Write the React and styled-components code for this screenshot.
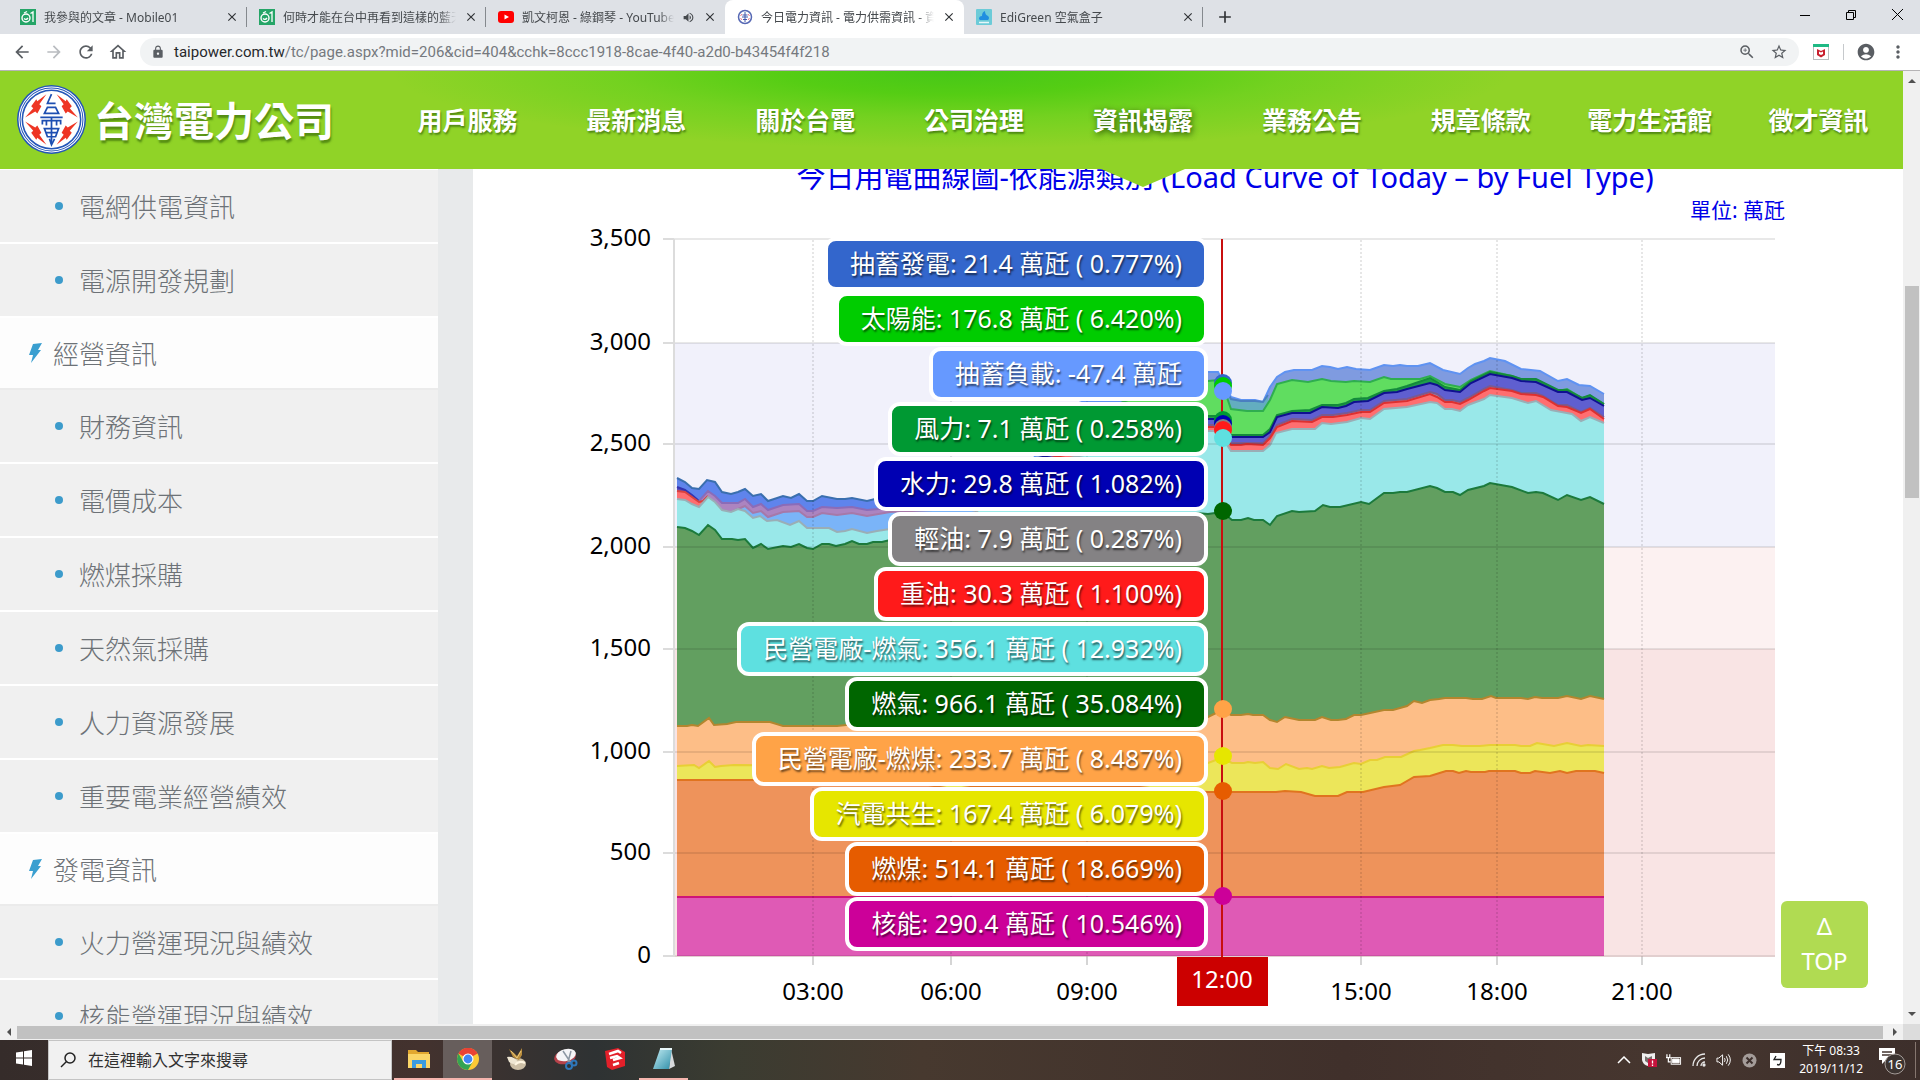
import styled, { createGlobalStyle, css } from "styled-components";
import {
  MdArrowBack,
  MdArrowForward,
  MdRefresh,
  MdOutlineHome,
  MdLock,
  MdZoomIn,
  MdStarBorder,
  MdAccountCircle,
  MdMoreVert,
  MdVolumeUp,
  MdClose,
  MdAdd,
} from "react-icons/md";

const GlobalStyle = createGlobalStyle`
  * {
    box-sizing: border-box;
  }

  body {
    margin: 0;
    font-family: "Noto Sans", "Noto Sans CJK TC", sans-serif;
    overflow: hidden;
  }

  ul {
    margin: 0;
    padding: 0;
    list-style: none;
  }

  a {
    color: inherit;
    text-decoration: none;
  }

  button {
    border: 0;
    padding: 0;
    background: none;
    font: inherit;
    color: inherit;
  }
`;

const Screen = styled.div`
  display: flex;
  flex-direction: column;
  height: 100vh;
  background-color: white;
`;

/* browser */

const TabStrip = styled.div`
  display: flex;
  flex: none;
  height: 34px;
  padding-left: 8px;
  background-color: #dee1e6;
`;

const Tab = styled.div`
  display: flex;
  align-items: center;
  gap: 8px;
  width: 239px;
  padding: 0 8px 0 12px;
  font-size: 12px;
  color: #45494d;
  border-radius: 8px 8px 0 0;
  background-color: ${({ $active }) => ($active ? "white" : "transparent")};

  & > svg {
    flex: none;
  }
`;

const TabTitle = styled.span`
  flex: 1;
  min-width: 0;
  overflow: hidden;
  white-space: nowrap;
  mask-image: linear-gradient(to right, black 90%, transparent);
`;

const TabButton = styled.button`
  display: flex;
  align-items: center;
  flex: none;
  font-size: 14px;
  color: #303336;
`;

const TabDivider = styled.span`
  flex: none;
  align-self: center;
  width: 1px;
  height: 20px;
  margin-left: -1px;
  background-color: #85898e;
`;

const NewTab = styled.button`
  display: flex;
  align-items: center;
  justify-content: center;
  width: 44px;
  font-size: 20px;
  color: #303336;
`;

const WindowButtons = styled.div`
  display: flex;
  margin-left: auto;
`;

const WindowButton = styled.button`
  width: 46px;
  height: 28px;
`;

const Toolbar = styled.div`
  display: flex;
  align-items: center;
  flex: none;
  height: 37px;
  padding: 0 6px;
  border-bottom: 1px solid #b6b4b6;
  color: #5a5e63;
`;

const ToolButton = styled.button`
  display: flex;
  align-items: center;
  justify-content: center;
  width: 32px;
  height: 28px;
  font-size: 20px;
  color: ${({ $muted }) => ($muted ? "#b9bcc0" : "inherit")};
`;

const AddressBar = styled.div`
  display: flex;
  align-items: center;
  flex: 1;
  height: 28px;
  margin-left: 6px;
  margin-right: 6px;
  padding-left: 11px;
  padding-right: 4px;
  border-radius: 14px;
  background-color: #f1f3f4;
`;

const AddressInput = styled.div`
  flex: 1;
  padding-left: 9px;
  font-family: Roboto, sans-serif;
  font-size: 15px;
  color: #75797e;

  & > b {
    font-weight: 400;
    color: #26282b;
  }
`;

const ToolDivider = styled.span`
  width: 1px;
  height: 16px;
  margin: 0 6px;
  background-color: #c6c9cc;
`;

const Viewport = styled.div`
  display: grid;
  grid-template-columns: minmax(0, 1fr) 17px;
  grid-template-rows: minmax(0, 1fr) 16px;
  flex: 1;
  min-height: 0;
`;

const VerticalBar = styled.div`
  display: flex;
  flex-direction: column;
  align-items: center;
  justify-content: space-between;
  padding: 6px 0;
  background-color: #f0f0f0;
`;

const VerticalThumb = styled.div`
  width: 14px;
  height: 212px;
  margin-bottom: 311px;
  background-color: #c1c1c1;
`;

const HorizontalBar = styled.div`
  display: flex;
  align-items: center;
  gap: 4px;
  padding: 0 4px 0 5px;
  background-color: #f0f0f0;
`;

const HorizontalThumb = styled.div`
  flex: 1;
  height: 13px;
  margin-right: 4px;
  background-color: #c1c1c1;
`;

const Corner = styled.div`
  background-color: #dcdcdc;
`;

/* site */

const Site = styled.div`
  position: relative;
  display: flex;
  flex-direction: column;
  min-width: 0;
  min-height: 0;
  overflow: hidden;
`;

const SiteHeader = styled.header`
  position: relative;
  z-index: 1;
  display: flex;
  flex: none;
  height: 98px;
  background:
    radial-gradient(ellipse 560px 78px at 50% 0, #46c718 0%, #55cd14 30%, rgba(108, 209, 30, 0.8) 60%, rgba(143, 211, 38, 0) 100%),
    #90d327;
`;

const Brand = styled.a`
  display: flex;
  align-items: center;
  flex: none;
  gap: 8px;
  width: 383px;
  padding-left: 17px;
  padding-bottom: 2px;
  font-family: "Noto Sans CJK TC", sans-serif;
  font-size: 40px;
  font-weight: 700;
  color: white;
  text-shadow: 1px 3px 2px rgba(60, 110, 10, 0.7);
`;

const MainNav = styled.nav`
  display: flex;
  flex: 1;
`;

const NavLink = styled.a`
  position: relative;
  display: flex;
  align-items: center;
  justify-content: center;
  flex: 1 1 0;
  padding-bottom: 3px;
  white-space: nowrap;
  font-size: 25px;
  font-weight: 700;
  color: white;
  text-shadow: 1px 2px 2px rgba(50, 100, 10, 0.7);

  ${({ $active }) =>
    $active &&
    css`
      text-shadow: 1px 2px 6px rgba(30, 70, 0, 0.9);

      &::after {
        content: "";
        position: absolute;
        top: 100%;
        left: 50%;
        margin-left: -42px;
        border: 42px solid transparent;
        border-top: 18px solid #90d327;
        border-bottom: 0;
      }
    `}
`;

const Body = styled.div`
  display: flex;
  flex: 1;
  min-height: 0;
`;

const Sidebar = styled.nav`
  flex: none;
  width: 473px;
  padding-top: 1px;
  border-right: 35px solid #e8eaeb;
  overflow: hidden;
`;

const SideLink = styled.a`
  display: flex;
  align-items: center;
  gap: 16px;
  height: 74px;
  padding-left: 55px;
  border-bottom: 2px solid white;
  background-color: #f0f0f0;
  font-size: 26px;
  font-weight: 300;
  color: #6d7277;

  &::before {
    content: "";
    width: 8px;
    height: 8px;
    border-radius: 50%;
    background-color: #3c9bcb;
  }
`;

const SideHeading = styled.a`
  display: flex;
  align-items: center;
  gap: 10px;
  height: 72px;
  padding-left: 28px;
  border-bottom: 2px solid #ebebeb;
  background-color: #fdfdfd;
  font-size: 26px;
  font-weight: 300;
  color: #6d7277;
`;

const Main = styled.main`
  flex: 1;
  min-width: 0;
  overflow: hidden;
`;

const Figure = styled.figure`
  width: 1216px;
  margin: 0 auto;
`;

const ChartTitle = styled.figcaption`
  margin-top: -10px;
  padding-left: 74px;
  font-size: 29px;
  line-height: 36px;
  text-align: center;
  white-space: nowrap;
  color: #0000e8;
`;

const Unit = styled.p`
  margin: 0;
  padding-right: 11px;
  font-size: 21px;
  line-height: 31px;
  text-align: right;
  color: #0000e8;
`;

const ChartArea = styled.div`
  position: relative;

  & > svg {
    display: block;
    width: 100%;
  }
`;

const AxisText = styled.text`
  font-size: 24px;
  fill: ${({ $light }) => ($light ? "white" : "black")};
`;

const Balloons = styled.ul`
  position: absolute;
  top: 11px;
  right: 588px;
  display: flex;
  flex-direction: column;
  align-items: flex-end;
  gap: 1px;
`;

const Balloon = styled.li`
  height: 54px;
  padding: 0 22px;
  border: 4px solid white;
  border-radius: 12px;
  background-color: ${({ $color }) => $color};
  font-size: 25px;
  line-height: 44px;
  white-space: nowrap;
  color: white;
  text-shadow: 1px 2px 2px rgba(0, 0, 0, 0.6);
`;

const TopButton = styled.a`
  position: absolute;
  right: 35px;
  bottom: 36px;
  width: 87px;
  padding: 7px 0 10px;
  border-radius: 6px;
  background-color: #b0db52;
  font-size: 24px;
  line-height: 35px;
  text-align: center;
  color: white;
`;

/* taskbar */

const Taskbar = styled.footer`
  display: flex;
  flex: none;
  height: 40px;
  background: linear-gradient(to right, #352c2a 0, #43322e 22%, #2e3233 31%, #3b3c31 38%, #47392f 48%, #40302b 70%, #46362f 86%, #3d2f2b 100%);
  color: white;
`;

const StartButton = styled.button`
  width: 48px;
`;

const SearchBox = styled.label`
  display: flex;
  align-items: center;
  gap: 12px;
  width: 344px;
  padding-left: 11px;
  border: 1px solid #c4c4c4;
  background-color: #f1f1f1;
`;

const SearchInput = styled.input`
  flex: 1;
  min-width: 0;
  border: 0;
  padding: 0;
  background: none;
  font-family: inherit;
  font-size: 16px;

  &::placeholder {
    color: #303030;
    opacity: 1;
  }
`;

const TaskButton = styled.button`
  display: flex;
  align-items: center;
  justify-content: center;
  width: 49px;
  margin-left: ${({ $first }) => ($first ? 2 : 0)}px;
  border-bottom: 2px solid ${({ $open }) => ($open ? "#f5b5ae" : "transparent")};
  background-color: ${({ $active }) => ($active ? "#675e5c" : "transparent")};
`;

const Tray = styled.div`
  display: flex;
  align-items: center;
  gap: 9px;
  margin-left: auto;
  padding-right: 4px;
`;

const TrayIcon = styled.button`
  display: flex;
  align-items: center;
  justify-content: center;
  width: 16px;
  margin-left: ${({ $apart }) => ($apart ? 3 : 0)}px;
`;

const Clock = styled.div`
  margin: 0 6px 0 5px;
  font-size: 12px;
  line-height: 18px;
  text-align: center;
`;

const Notifications = styled.button`
  display: flex;
  align-items: center;
  width: 38px;
  height: 36px;
  border-right: 1px solid #85766f;
`;

const nav = [
  "用戶服務",
  "最新消息",
  "關於台電",
  "公司治理",
  "資訊揭露",
  "業務公告",
  "規章條款",
  "電力生活館",
  "徵才資訊",
];

const sideMenu = [
  { text: "電網供電資訊" },
  { text: "電源開發規劃" },
  { text: "經營資訊", heading: true },
  { text: "財務資訊" },
  { text: "電價成本" },
  { text: "燃煤採購" },
  { text: "天然氣採購" },
  { text: "人力資源發展" },
  { text: "重要電業經營績效" },
  { text: "發電資訊", heading: true },
  { text: "火力營運現況與績效" },
  { text: "核能營運現況與績效" },
];

const balloons = [
  { text: "抽蓄發電: 21.4 萬瓩 ( 0.777%)", color: "#3366cc" },
  { text: "太陽能: 176.8 萬瓩 ( 6.420%)", color: "#00cc00" },
  { text: "抽蓄負載: -47.4 萬瓩", color: "#6699ff" },
  { text: "風力: 7.1 萬瓩 ( 0.258%)", color: "#009933" },
  { text: "水力: 29.8 萬瓩 ( 1.082%)", color: "#0000b3" },
  { text: "輕油: 7.9 萬瓩 ( 0.287%)", color: "#848284" },
  { text: "重油: 30.3 萬瓩 ( 1.100%)", color: "#ff1a1a" },
  { text: "民營電廠-燃氣: 356.1 萬瓩 ( 12.932%)", color: "#5ee0e0" },
  { text: "燃氣: 966.1 萬瓩 ( 35.084%)", color: "#006600" },
  { text: "民營電廠-燃煤: 233.7 萬瓩 ( 8.487%)", color: "#ffa347" },
  { text: "汽電共生: 167.4 萬瓩 ( 6.079%)", color: "#e6e600" },
  { text: "燃煤: 514.1 萬瓩 ( 18.669%)", color: "#e65c00" },
  { text: "核能: 290.4 萬瓩 ( 10.546%)", color: "#cc0099" },
];

// every series is the top edge of its area, drawn back to front
const series = [
  {
    name: "pump-night",
    fill: "#5f84ec",
    stroke: "#3a6fae",
    points:
      "677,478 685,482 692,488 699,489 707,480 715,482 722,492 731,494 738,492 745,489 753,496 761,494 768,501 783,496 791,498 799,494 807,501 813,501 822,496 837,499 845,499 852,498 867,501 875,499 890,500 940,500",
  },
  {
    name: "hydro-night",
    fill: "#5a4bb4",
    stroke: "#3434b0",
    points: "677,487 685,490 692,495 699,501 702,501",
  },
  {
    name: "oil-night",
    fill: "#ac84c0",
    stroke: "#8a6cb8",
    points:
      "699,501 708,491 715,496 722,503 738,503 745,499 753,507 761,504 768,510 783,505 799,504 807,511 813,511 822,507 837,508 852,507 867,510 890,508 940,505",
  },
  {
    name: "load-night",
    fill: "#7ab4f8",
    stroke: "#a679a9",
    points:
      "718,507 722,510 731,512 738,509 745,506 753,513 761,511 768,517 783,512 799,511 807,517 813,517 822,513 837,515 852,513 867,516 890,512 976,508 976,512",
  },
  {
    name: "heavy-oil-night",
    fill: "#ff6e70",
    stroke: "#d9413f",
    points: "677,491 685,492 692,497 699,502 703,501 708,496",
  },
  {
    name: "pumped",
    fill: "#7f9be0",
    stroke: "#5f93f2",
    points:
      "1034,458 1060,415 1076,404 1085,401 1120,401 1208,372 1218,372 1223,382 1231,397 1241,400 1255,400 1263,402 1270,387 1277,377 1285,372 1294,370 1312,370 1322,366 1330,367 1338,369 1347,367 1356,369 1370,370 1384,365 1393,366 1400,365 1407,366 1418,366 1430,363 1443,370 1460,374 1468,368 1475,364 1484,361 1490,358 1505,361 1521,369 1540,371 1558,381 1567,379 1579,385 1590,386 1604,394",
  },
  {
    name: "pump-noon",
    fill: "#63adc0",
    stroke: "#4a7fc0",
    points: "1218,376 1231,399 1241,401 1255,401 1263,402 1268,395",
  },
  {
    name: "solar",
    fill: "#60dd60",
    stroke: "#2fae4f",
    points:
      "1110,408 1118,404 1128,400 1208,381 1218,380 1223,386 1231,409 1247,411 1263,411 1270,400 1277,384 1292,380 1308,382 1322,379 1331,381 1346,382 1354,381 1370,382 1384,377 1391,379 1420,379 1430,376 1445,384 1460,387 1471,380 1490,371 1512,376 1526,381 1537,380 1558,391 1567,389 1582,398 1590,396 1604,404",
  },
  {
    name: "wind",
    fill: "#1f9b4b",
    stroke: "#148a3c",
    points:
      "1208,416 1218,416 1231,435 1263,435 1270,429 1277,415 1292,411 1310,410 1322,405 1338,405 1346,403 1354,399 1368,398 1384,391 1397,389 1407,386 1430,378 1437,382 1445,387 1460,390 1471,381 1490,372 1512,376 1521,379 1536,379 1558,390 1567,390 1582,398 1590,395 1604,404",
  },
  {
    name: "hydro",
    fill: "#5f5fd0",
    stroke: "#101090",
    points:
      "1034,459 1208,419 1218,419 1231,437 1263,437 1270,432 1277,417 1292,413 1310,413 1322,407 1338,408 1346,406 1354,402 1368,401 1384,393 1397,392 1407,389 1430,383 1437,385 1445,390 1460,392 1471,383 1490,374 1512,378 1521,381 1536,382 1558,392 1567,392 1582,400 1590,398 1604,406",
  },
  {
    name: "light-oil",
    fill: "#a58fb4",
    stroke: "#7a5a90",
    points:
      "1208,425 1218,425 1231,443 1247,443 1263,443 1270,436 1277,425 1292,419 1312,420 1322,415 1333,415 1347,413 1361,410 1370,410 1384,401 1407,399 1430,392 1437,394 1445,400 1452,400 1460,402 1468,398 1484,389 1490,386 1512,390 1521,393 1536,393 1543,396 1558,405 1567,405 1581,412 1590,408 1604,417",
  },
  {
    name: "heavy-oil",
    fill: "#ff6e70",
    stroke: "#dd3030",
    points:
      "1050,458 1208,427 1218,427 1231,445 1241,445 1247,444 1263,445 1270,438 1277,427 1292,421 1312,422 1322,417 1333,417 1347,415 1361,412 1370,412 1384,403 1407,401 1430,394 1437,397 1445,402 1452,402 1460,404 1468,400 1484,391 1490,388 1512,391 1521,394 1536,395 1543,397 1558,406 1567,407 1581,413 1590,409 1604,419",
  },
  {
    name: "ipp-gas",
    fill: "#99e8e9",
    stroke: "#9aaeb6",
    points:
      "677,499 685,500 692,504 699,507 708,497 715,502 722,510 731,512 738,509 745,511 753,518 760,516 767,521 777,520 790,525 799,521 807,528 829,528 837,532 845,531 852,529 867,533 877,531 890,529 940,520 976,512 1034,462 1069,458 1208,431 1218,431 1231,451 1263,451 1270,445 1276,433 1292,429 1315,429 1322,423 1331,424 1347,422 1361,418 1370,419 1384,409 1407,407 1430,402 1437,403 1445,409 1452,409 1460,411 1468,405 1484,399 1490,395 1512,398 1528,403 1536,401 1551,410 1572,414 1581,421 1590,417 1604,423",
  },
  {
    name: "gas",
    fill: "#629f60",
    stroke: "#1c7a3c",
    points:
      "677,527 685,528 692,531 699,535 708,525 715,530 722,539 732,539 738,540 745,539 753,548 761,544 768,549 783,546 791,547 799,544 807,548 813,549 822,544 829,544 836,546 845,544 852,541 859,544 867,544 873,542 882,542 890,540 1150,520 1196,513 1208,514 1222,512 1232,520 1241,520 1248,518 1254,520 1263,520 1270,525 1277,516 1292,511 1299,512 1315,511 1323,505 1330,507 1340,507 1361,502 1369,504 1384,493 1393,493 1400,492 1407,492 1430,486 1437,488 1445,492 1453,492 1460,495 1468,490 1484,486 1490,483 1512,487 1528,493 1536,492 1543,493 1558,500 1567,495 1581,500 1590,497 1604,504",
  },
  {
    name: "ipp-coal",
    fill: "#fdbe87",
    stroke: "#b3862e",
    points:
      "677,726 687,726 692,725 698,726 709,718 714,725 727,724 736,722 770,722 783,726 837,726 846,725 1150,725 1208,717 1214,714 1222,710 1231,715 1241,715 1248,714 1253,715 1263,715 1270,720 1277,722 1285,717 1299,720 1315,720 1322,717 1331,720 1338,720 1346,719 1354,715 1361,715 1384,710 1393,710 1407,706 1414,701 1422,703 1430,700 1439,699 1445,698 1466,698 1473,699 1482,699 1491,696 1496,698 1521,698 1528,699 1535,697 1542,698 1558,698 1567,696 1581,699 1590,696 1604,699",
  },
  {
    name: "cogen",
    fill: "#ece65a",
    stroke: "#e8cf35",
    points:
      "677,766 694,765 699,768 709,761 715,767 721,766 734,765 900,766 1150,768 1208,763 1216,760 1222,758 1232,763 1244,763 1248,762 1255,763 1263,762 1270,768 1278,769 1286,764 1299,769 1307,768 1312,769 1322,766 1329,768 1340,767 1354,763 1361,764 1370,760 1377,760 1385,757 1401,757 1414,751 1420,750 1430,748 1443,745 1453,745 1462,746 1480,746 1490,745 1515,745 1521,746 1530,746 1537,743 1554,746 1567,743 1581,746 1588,745 1604,746",
  },
  {
    name: "coal",
    fill: "#ee935b",
    stroke: "#e0741f",
    points:
      "677,780 900,780 940,787 953,789 970,787 1140,787 1160,789 1208,792 1276,792 1285,791 1301,792 1315,796 1338,796 1347,792 1363,792 1384,787 1400,785 1414,777 1430,776 1446,771 1453,771 1459,773 1466,771 1471,772 1485,772 1489,771 1515,771 1521,773 1530,773 1535,771 1550,773 1560,771 1567,773 1576,771 1595,771 1604,773",
  },
  {
    name: "nuclear",
    fill: "#df5ab5",
    stroke: "#cf1478",
    points: "677,897 1604,897",
  },
];

const bands = [
  { y: 343, height: 204, fill: "#f1f1fb" },
  { y: 547, height: 102, fill: "#fcf1f1" },
  { y: 649, height: 308, fill: "#f9e4e4" },
];

const yTicks = [
  [239, "3,500"],
  [343, "3,000"],
  [444, "2,500"],
  [547, "2,000"],
  [649, "1,500"],
  [752, "1,000"],
  [853, "500"],
  [956, "0"],
];

const xTicks = [
  [813, "03:00"],
  [951, "06:00"],
  [1087, "09:00"],
  [1361, "15:00"],
  [1497, "18:00"],
  [1642, "21:00"],
];

const markers = [
  [383, "#3366cc"],
  [386, "#00cc00"],
  [391, "#6699ff"],
  [420, "#009933"],
  [424, "#0000b3"],
  [428, "#848284"],
  [430, "#ff1a1a"],
  [438, "#5ee0e0"],
  [511, "#006600"],
  [709, "#ffa347"],
  [756, "#e6e600"],
  [791, "#e65c00"],
  [896, "#cc0099"],
];

function Area({ points, fill, stroke }) {
  const list = points.split(" ");
  const first = list[0].split(",")[0];
  const last = list[list.length - 1].split(",")[0];
  return (
    <>
      <polygon points={`${first},956 ${points} ${last},956`} fill={fill} />
      <polyline points={points} fill="none" stroke={stroke} strokeWidth="2" />
    </>
  );
}

function LoadCurve() {
  return (
    <svg viewBox="580 226 1216 790">
      {bands.map((band) => (
        <rect key={band.y} x="674" width="1101" {...band} />
      ))}
      {series.map((item) => (
        <Area key={item.name} {...item} />
      ))}
      {yTicks.map(([y, label]) => (
        <g key={label}>
          <path d={`M674 ${y}H1775`} stroke="#000" strokeOpacity="0.09" strokeWidth="2" />
          <path d={`M663 ${y}H674`} stroke="#dcdcdc" strokeWidth="2" />
          <AxisText x="651" y={y + 7} textAnchor="end">
            {label}
          </AxisText>
        </g>
      ))}
      <path d="M674 239V957" stroke="#dcdcdc" strokeWidth="2" />
      {xTicks.map(([x, label]) => (
        <g key={label}>
          <path d={`M${x} 240V957`} stroke="#000" strokeOpacity="0.2" strokeDasharray="2 2" />
          <path d={`M${x} 957V965`} stroke="#d5d5d5" strokeWidth="2" />
          <AxisText x={x} y="1000" textAnchor="middle">
            {label}
          </AxisText>
        </g>
      ))}
      <path d="M1222 239V957" stroke="#c80f0f" strokeWidth="2" />
      {markers.map(([y, color]) => (
        <circle key={y} cx="1223" cy={y} r="9" fill={color} />
      ))}
      <rect x="1177" y="957" width="91" height="49" fill="#cc0000" />
      <AxisText x="1222" y="988" textAnchor="middle" $light>
        12:00
      </AxisText>
    </svg>
  );
}

function Emblem() {
  const bolt = "M-5 -25 L-14 -18 L-15 -20 L-20 -13 L-18 -11 L-26 -2 L-16 -8 L-14 -6 L-10 -13 L-12 -15 Z";
  return (
    <svg width="69" height="69" viewBox="-34 -34 68 68">
      <circle r="34" fill="#2456b8" />
      <circle r="32" fill="none" stroke="#fff" strokeWidth="1" />
      <circle r="30" fill="none" stroke="#fff" strokeWidth="1" />
      <circle r="28" fill="#fff" />
      <g fill="#ee3524">
        <path d={bolt} />
        <path d={bolt} transform="scale(-1 1)" />
        <path d={bolt} transform="scale(1 -1)" />
        <path d={bolt} transform="scale(-1 -1)" />
      </g>
      <g fill="none" stroke="#1d4fb2" strokeWidth="1.700">
        <path d="M0 -25 L-4 -16 H4 M-4 -12 H4 L7 -6 H-7 Z" />
        <path d="M-11 -2 H11 M-9 5 V1 H9 V5 M0 -2 V24 M-5 2 V6 M5 2 V6" />
        <path d="M-7 9 H7 L4 17 H-4 Z M-6 13 H6 M-2 19 L0 25 L3 19" />
      </g>
    </svg>
  );
}

function BoltIcon() {
  return (
    <svg width="15" height="20" viewBox="0 0 15 20">
      <path d="M5 1 L14 0 L10 7 L13 7 L3 20 L5 12 L1 12 Z" fill="#3a9fd0" />
    </svg>
  );
}

function ForumIcon() {
  return (
    <svg width="16" height="16" viewBox="0 0 16 16">
      <rect width="16" height="16" fill="#25a567" />
      <circle cx="6" cy="9" r="4" fill="none" stroke="#fff" strokeWidth="1.4" />
      <path d="M4 9.500 Q6 11.500 8 9 M4 4 L7 2.500 M10.500 4.500 L13 3 V13" fill="none" stroke="#fff" strokeWidth="1.300" />
    </svg>
  );
}

function VideoIcon() {
  return (
    <svg width="16" height="16" viewBox="0 0 16 16">
      <rect y="2" width="16" height="12" rx="3" fill="#f00" />
      <path d="M6.500 5.500 L11 8 L6.500 10.500 Z" fill="#fff" />
    </svg>
  );
}

function PowerIcon() {
  return (
    <svg width="16" height="16" viewBox="0 0 16 16">
      <circle cx="8" cy="8" r="6.500" fill="#fff" stroke="#5668b4" strokeWidth="1.500" />
      <path d="M8 3 V13 M5.500 6 H10.500 M5 8 H11 M6 10.500 H10" stroke="#4358ac" />
      <path d="M3.500 7 L5 5 M12.500 7 L11 5 M3.500 9 L5 11 M12.500 9 L11 11" stroke="#e78" />
    </svg>
  );
}

function AirIcon() {
  return (
    <svg width="16" height="16" viewBox="0 0 16 16">
      <rect width="16" height="16" rx="1" fill="#6ccbd8" />
      <path d="M3 10 Q3 7 6 7 Q6 3 9 2 Q9 6 12 7 Q14 9 12 11 H4 Z" fill="#1f8fe0" />
      <path d="M3 13.500 H13" stroke="#e5f7f9" strokeWidth="1.500" />
    </svg>
  );
}

function ShieldIcon() {
  return (
    <svg width="16" height="16" viewBox="0 0 16 16">
      <rect x="0.500" y="0.500" width="15" height="15" fill="#fff" stroke="#b9bdc0" />
      <rect width="16" height="3" fill="#1fb984" />
      <path d="M4 5 L8 7 L12 5 V11 L8 13.500 L4 11 Z" fill="#c8202f" />
      <path d="M6 7.500 L8 8.500 L10 7.500 V10 L8 11 L6 10 Z" fill="#fff" />
    </svg>
  );
}

function Arrow({ d }) {
  return (
    <svg width="8" height="8" viewBox="0 0 8 8">
      <path d={d} fill="#505050" />
    </svg>
  );
}

function BrowserTab({ icon, title, active, audio }) {
  return (
    <Tab $active={active}>
      {icon}
      <TabTitle>{title}</TabTitle>
      {audio && <MdVolumeUp size={13} />}
      <TabButton type="button" aria-label="關閉">
        <MdClose />
      </TabButton>
    </Tab>
  );
}

function Browser() {
  return (
    <>
      <TabStrip>
        <BrowserTab icon={<ForumIcon />} title="我參與的文章 - Mobile01" />
        <TabDivider />
        <BrowserTab icon={<ForumIcon />} title="何時才能在台中再看到這樣的藍天" />
        <TabDivider />
        <BrowserTab icon={<VideoIcon />} title="凱文柯恩 - 綠鋼琴 - YouTube" audio />
        <BrowserTab icon={<PowerIcon />} title="今日電力資訊 - 電力供需資訊 - 資" active />
        <BrowserTab icon={<AirIcon />} title="EdiGreen 空氣盒子" />
        <TabDivider />
        <NewTab type="button" aria-label="新分頁">
          <MdAdd />
        </NewTab>
        <WindowButtons>
          <WindowButton type="button" aria-label="最小化">
            <svg width="10" height="10">
              <path d="M0 5.500H10" stroke="#000" />
            </svg>
          </WindowButton>
          <WindowButton type="button" aria-label="還原">
            <svg width="10" height="10" fill="none" stroke="#000">
              <path d="M0.500 2.500H7.500V9.500H0.500Z M2.500 2.500V0.500H9.500V7.500H7.500" />
            </svg>
          </WindowButton>
          <WindowButton type="button" aria-label="關閉視窗">
            <svg width="11" height="11">
              <path d="M0 0L11 11M11 0L0 11" stroke="#000" />
            </svg>
          </WindowButton>
        </WindowButtons>
      </TabStrip>
      <Toolbar>
        <ToolButton type="button" aria-label="上一頁">
          <MdArrowBack />
        </ToolButton>
        <ToolButton type="button" aria-label="下一頁" $muted>
          <MdArrowForward />
        </ToolButton>
        <ToolButton type="button" aria-label="重新載入">
          <MdRefresh />
        </ToolButton>
        <ToolButton type="button" aria-label="首頁">
          <MdOutlineHome />
        </ToolButton>
        <AddressBar>
          <MdLock size={14} />
          <AddressInput role="textbox" aria-label="網址">
            <b>taipower.com.tw</b>/tc/page.aspx?mid=206&amp;cid=404&amp;cchk=8ccc1918-8cae-4f40-a2d0-b43454f4f218
          </AddressInput>
          <ToolButton type="button" aria-label="縮放">
            <MdZoomIn size={18} />
          </ToolButton>
          <ToolButton type="button" aria-label="加入書籤">
            <MdStarBorder size={18} />
          </ToolButton>
        </AddressBar>
        <ToolButton type="button" aria-label="McAfee">
          <ShieldIcon />
        </ToolButton>
        <ToolDivider />
        <ToolButton type="button" aria-label="使用者">
          <MdAccountCircle />
        </ToolButton>
        <ToolButton type="button" aria-label="選單">
          <MdMoreVert />
        </ToolButton>
      </Toolbar>
    </>
  );
}

function TaskIcons() {
  return (
    <>
      <TaskButton type="button" aria-label="檔案總管" $first $open>
        <svg width="24" height="22" viewBox="0 0 24 22">
          <path d="M1 2 H9 L11 4 H22 V19 H1 Z" fill="#e2a830" />
          <path d="M1 6 H23 V20 H1 Z" fill="#fbd668" />
          <path d="M5 20 V12 H19 V20 H15 V16 H9 V20 Z" fill="#3a9be0" />
        </svg>
      </TaskButton>
      <TaskButton type="button" aria-label="Chrome" $open $active>
        <svg width="24" height="24" viewBox="-12 -12 24 24">
          <circle r="11" fill="#fcc934" />
          <path d="M0 0 L-9.500 -5.500 A11 11 0 0 1 9.500 -5.500 Z" fill="#e94235" />
          <path d="M0 -5.500 H9.500 A11 11 0 0 0 -9.500 -5.500 Z" fill="#e94235" />
          <path d="M-9.500 -5.500 A11 11 0 0 0 0 11 L4.700 2.700 L-4.700 2.700 Z" fill="#34a353" />
          <circle r="5.500" fill="#fff" />
          <circle r="4.400" fill="#4285f4" />
        </svg>
      </TaskButton>
      <TaskButton type="button" aria-label="工具">
        <svg width="24" height="24" viewBox="0 0 24 24">
          <ellipse cx="13" cy="17" rx="8" ry="6" fill="#cdbfa6" />
          <path d="M2 10 Q9 9 13 15 Q9 19 4 15 Z" fill="#efe6d2" />
          <path d="M4 2 L9 6 L12 9 L17 1 L17 8 L14 13 L8 10 Z" fill="#b98c3c" />
          <path d="M6 4 L12 11 L16 4" fill="none" stroke="#ecca7c" />
          <path d="M10 18 Q14 13 20 16" fill="none" stroke="#fff6e2" strokeWidth="2" />
        </svg>
      </TaskButton>
      <TaskButton type="button" aria-label="剪取工具">
        <svg width="24" height="24" viewBox="0 0 24 24">
          <ellipse cx="11" cy="10" rx="11" ry="7" fill="#b5424a" transform="rotate(-14 11 10)" />
          <ellipse cx="12" cy="8" rx="10" ry="6" fill="#f5f5f7" transform="rotate(-14 12 8)" />
          <path d="M9 4 L17 16 M17 4 L14 15" stroke="#8d97a3" strokeWidth="1.500" />
          <g fill="none" stroke="#2f77ba" strokeWidth="2">
            <circle cx="15" cy="19" r="3" />
            <circle cx="20" cy="16" r="2.500" />
          </g>
        </svg>
      </TaskButton>
      <TaskButton type="button" aria-label="SketchUp">
        <svg width="22" height="24" viewBox="0 0 22 24">
          <path d="M1 4 L14 1 L21 5 V19 L8 23 L3 20 Z" fill="#e3202a" />
          <path d="M5 7 L14 4 L17 6 M6 11 L13 9 L16 11 L9 13 M9 18 L15 16" fill="none" stroke="#fff" strokeWidth="2.500" />
        </svg>
      </TaskButton>
      <TaskButton type="button" aria-label="記事本" $open>
        <svg width="24" height="24" viewBox="0 0 24 24">
          <defs>
            <linearGradient id="note" x1="0" y1="0" x2="1" y2="1">
              <stop offset="0" stopColor="#c5eef4" />
              <stop offset="1" stopColor="#2f8ea8" />
            </linearGradient>
          </defs>
          <path d="M19 2 L23 19 L17 22 Z" fill="#d8dadc" />
          <path d="M8 2 H20 L17 22 H1 Z" fill="url(#note)" />
          <path d="M8 2 H20" stroke="#e9f7fa" strokeWidth="2" />
        </svg>
      </TaskButton>
    </>
  );
}

function TrayIcons() {
  return (
    <Tray>
      <TrayIcon type="button" aria-label="顯示隱藏的圖示">
        <svg width="14" height="8">
          <path d="M1 7L7 1L13 7" fill="none" stroke="#fff" strokeWidth="1.500" />
        </svg>
      </TrayIcon>
      <TrayIcon type="button" aria-label="防毒">
        <svg width="16" height="16" viewBox="0 0 16 16">
          <path d="M1 1 L7 2 L14 1 V8 Q12 13 7 14 Q2 13 1 8 Z" fill="#efefef" />
          <path d="M4 4 L7 6 L11 4 V9 L7 11 L4 9 Z" fill="#77706e" />
          <rect x="7" y="7" width="9" height="8" fill="#c5143c" />
          <path d="M11.500 8.500V11.500M11.500 12.500V14" stroke="#fff" strokeWidth="1.300" />
        </svg>
      </TrayIcon>
      <TrayIcon type="button" aria-label="電池">
        <svg width="17" height="14" viewBox="0 0 17 14" fill="none" stroke="#fff">
          <rect x="5.500" y="4.500" width="10" height="7" />
          <path d="M7 6H14V10H7Z" fill="#fff" />
          <path d="M1 1V4M4 1V4M0 4.500H5M2.500 5V9H5" strokeWidth="1.300" />
        </svg>
      </TrayIcon>
      <TrayIcon type="button" aria-label="網路">
        <svg width="14" height="14" viewBox="0 0 14 14" fill="none" stroke="#e8e8e8" strokeWidth="1.300">
          <path d="M1 13A12 12 0 0 1 13 1M5 13A8 8 0 0 1 13 5M9 13A4 4 0 0 1 13 9" />
          <circle cx="12" cy="12" r="1" fill="#fff" />
        </svg>
      </TrayIcon>
      <TrayIcon type="button" aria-label="音量">
        <svg width="17" height="14" viewBox="0 0 17 14" fill="none" stroke="#fff">
          <path d="M1 5H3L7 1.500V12.500L3 9H1Z" />
          <path d="M9 5Q10.500 7 9 9M11 3Q14 7 11 11M13 1Q17.500 7 13 13" />
        </svg>
      </TrayIcon>
      <TrayIcon type="button" aria-label="已停用">
        <svg width="15" height="15" viewBox="0 0 15 15">
          <circle cx="7.500" cy="7.500" r="7" fill="#a49c99" />
          <path d="M4.500 4.500L10.500 10.500M10.500 4.500L4.500 10.500" stroke="#3d302d" strokeWidth="2" />
        </svg>
      </TrayIcon>
      <TrayIcon type="button" aria-label="輸入法" $apart>
        <svg width="15" height="15" viewBox="0 0 15 15">
          <rect width="15" height="15" fill="#fff" />
          <path d="M6 3L4 6.500H11Q11 11 9 12L7 11.500" fill="none" stroke="#222" strokeWidth="1.300" />
        </svg>
      </TrayIcon>
      <Clock>
        下午 08:33
        <br />
        2019/11/12
      </Clock>
      <Notifications type="button" aria-label="通知">
        <svg width="32" height="32" viewBox="0 0 32 32">
          <path d="M1 4H17V16H8L4 20V16H1Z" fill="#fff" />
          <path d="M4 8H14M4 11H14" stroke="#43342f" strokeWidth="1.300" />
          <circle cx="17" cy="20" r="10" fill="#3c3431" stroke="#a39b97" />
          <text x="17" y="25" textAnchor="middle" fontSize="13" fill="#fff">
            16
          </text>
        </svg>
      </Notifications>
    </Tray>
  );
}

export default function App() {
  return (
    <>
      <GlobalStyle />
      <Screen>
        <Browser />
        <Viewport>
          <Site>
            <SiteHeader>
              <Brand href="#">
                <Emblem />
                台灣電力公司
              </Brand>
              <MainNav>
                {nav.map((item) => (
                  <NavLink key={item} href="#" $active={item === "資訊揭露"}>
                    {item}
                  </NavLink>
                ))}
              </MainNav>
            </SiteHeader>
            <Body>
              <Sidebar>
                {sideMenu.map(({ text, heading }) =>
                  heading ? (
                    <SideHeading key={text} href="#">
                      <BoltIcon />
                      {text}
                    </SideHeading>
                  ) : (
                    <SideLink key={text} href="#">
                      {text}
                    </SideLink>
                  )
                )}
              </Sidebar>
              <Main>
                <Figure>
                  <ChartTitle>今日用電曲線圖-依能源類別 (Load Curve of Today – by Fuel Type)</ChartTitle>
                  <Unit>單位: 萬瓩</Unit>
                  <ChartArea>
                    <LoadCurve />
                    <Balloons>
                      {balloons.map(({ text, color }) => (
                        <Balloon key={text} $color={color}>
                          {text}
                        </Balloon>
                      ))}
                    </Balloons>
                  </ChartArea>
                </Figure>
              </Main>
            </Body>
            <TopButton href="#">
              Δ
              <br />
              TOP
            </TopButton>
          </Site>
          <VerticalBar>
            <Arrow d="M4 2L8 6H0Z" />
            <VerticalThumb />
            <Arrow d="M4 6L8 2H0Z" />
          </VerticalBar>
          <HorizontalBar>
            <Arrow d="M2 4L6 0V8Z" />
            <HorizontalThumb />
            <Arrow d="M6 4L2 0V8Z" />
          </HorizontalBar>
          <Corner />
        </Viewport>
        <Taskbar>
          <StartButton type="button" aria-label="開始">
            <svg width="16" height="16" viewBox="0 0 16 16" fill="#fff">
              <path d="M0 2.500L7 1.500V7.500H0Z M8 1.300L16 0V7.500H8Z M0 8.500H7V14.500L0 13.500Z M8 8.500H16V16L8 14.700Z" />
            </svg>
          </StartButton>
          <SearchBox>
            <svg width="16" height="16" viewBox="0 0 16 16" fill="none" stroke="#222" strokeWidth="1.500">
              <circle cx="10" cy="6" r="5" />
              <path d="M6.500 9.500L1 15" />
            </svg>
            <SearchInput type="text" placeholder="在這裡輸入文字來搜尋" aria-label="搜尋" />
          </SearchBox>
          <TaskIcons />
          <TrayIcons />
        </Taskbar>
      </Screen>
    </>
  );
}
